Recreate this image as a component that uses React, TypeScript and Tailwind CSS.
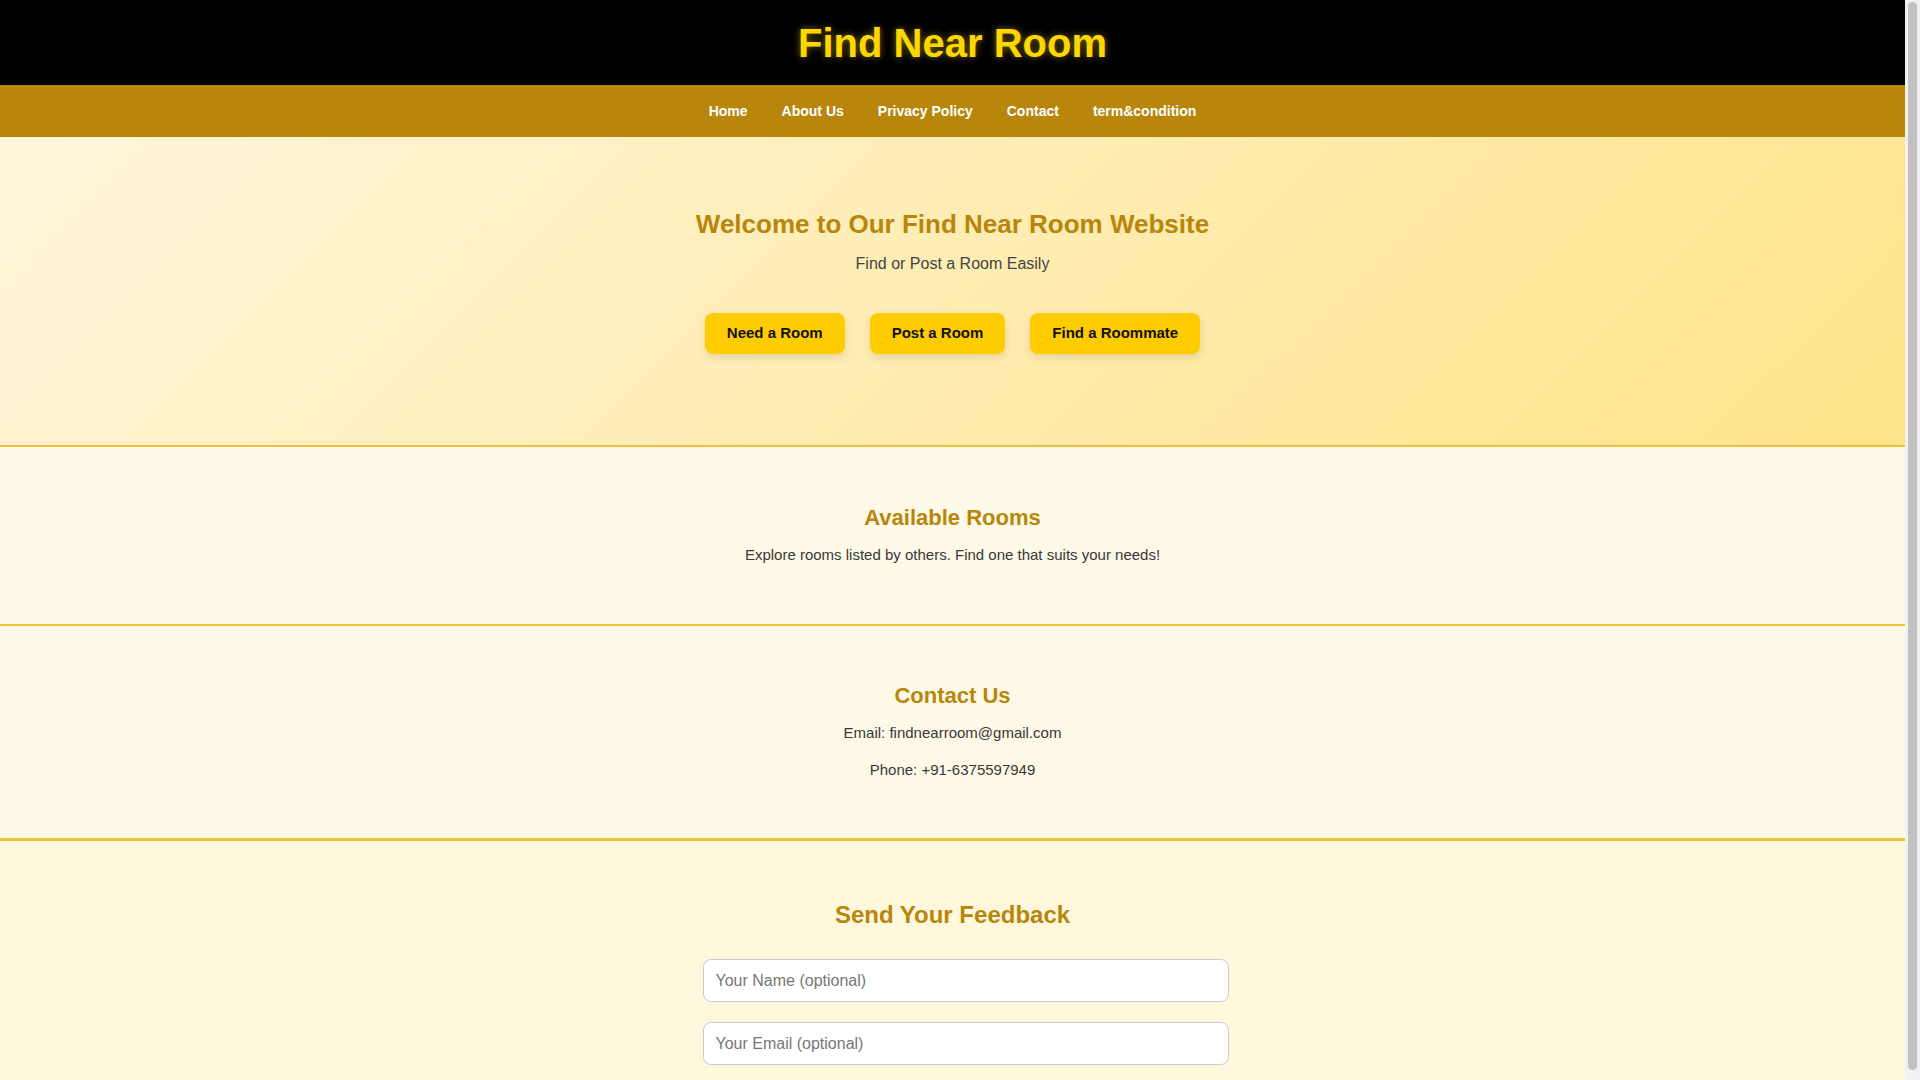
import React from "react";

const navLinks = ["Home", "About Us", "Privacy Policy", "Contact", "term&condition"];

const heroButtons = ["Need a Room", "Post a Room", "Find a Roommate"];

export default function App() {
  return (
    <div className="h-screen flex font-['Liberation_Sans',Arial,sans-serif] text-[#383838]">
      <main className="flex-1 min-w-0 overflow-y-auto bg-[#fffae8]">
        {/* header */}
        <header className="h-[85px] bg-black flex items-center justify-center">
          <h1 className="text-[40px] leading-[46px] font-bold text-[#ffd700] [text-shadow:0_0_7px_rgba(255,215,0,0.5)]">
            Find Near Room
          </h1>
        </header>

        <nav className="h-[52px] bg-[#b8860b] flex items-center justify-center gap-[34px]">
          {navLinks.map((link) => (
            <a key={link} href="#" className="text-[14px] font-bold text-white">
              {link}
            </a>
          ))}
        </nav>

        {/* hero */}
        <section className="bg-[linear-gradient(135deg,#fff6dc,#ffe388)] border-b-2 border-[#f0c03c] pt-[72px] pb-[91px] text-center">
          <h2 className="text-[26px] leading-[30px] font-bold text-[#b8860b]">
            Welcome to Our Find Near Room Website
          </h2>
          <p className="mt-4 text-[16px] leading-[18px] text-[#444]">Find or Post a Room Easily</p>
          <div className="mt-10 flex justify-center gap-[25px]">
            {heroButtons.map((label) => (
              <button
                key={label}
                className="h-[41px] px-[22px] rounded-lg bg-[#ffcc00] text-[15px] font-bold text-[#111] shadow-[0_4px_10px_rgba(0,0,0,0.1)]"
              >
                {label}
              </button>
            ))}
          </div>
        </section>

        {/* rooms */}
        <section className="border-b-2 border-[#f0c03c] pt-[58px] pb-[60px] text-center">
          <h2 className="text-[22px] leading-[26px] font-bold text-[#b8860b]">Available Rooms</h2>
          <p className="mt-[15px] text-[15px] leading-[18px]">
            Explore rooms listed by others. Find one that suits your needs!
          </p>
        </section>

        {/* contact */}
        <section className="border-b-[3px] border-[#f0c03c] pt-[57px] pb-[59px] text-center">
          <h2 className="text-[22px] leading-[26px] font-bold text-[#b8860b]">Contact Us</h2>
          <p className="mt-[15px] text-[15px] leading-[18px]">Email: findnearroom@gmail.com</p>
          <p className="mt-[19px] text-[15px] leading-[18px]">Phone: +91-6375597949</p>
        </section>

        {/* feedback */}
        <section className="bg-[#fff8dc] pt-[60px] pb-[40px]">
          <h2 className="text-center text-[24px] leading-[28px] font-bold text-[#b8860b]">
            Send Your Feedback
          </h2>
          <form className="mt-[30px] w-[500px] mx-auto flex flex-col items-start gap-5">
            <input
              type="text"
              placeholder="Your Name (optional)"
              className="w-[526px] h-[43px] px-3 rounded-lg border border-[#ccc] bg-white text-[16px] placeholder:text-[#777] outline-none"
            />
            <input
              type="email"
              placeholder="Your Email (optional)"
              className="w-[526px] h-[43px] px-3 rounded-lg border border-[#ccc] bg-white text-[16px] placeholder:text-[#777] outline-none"
            />
          </form>
        </section>
      </main>

      {/* scrollbar strip */}
      <div className="w-[15px] shrink-0 bg-[#f1f1f1] flex flex-col px-[3px] py-[2px]">
        <div className="flex-1 rounded-full bg-[#c1c1c1] mb-[8px]" />
      </div>
    </div>
  );
}
